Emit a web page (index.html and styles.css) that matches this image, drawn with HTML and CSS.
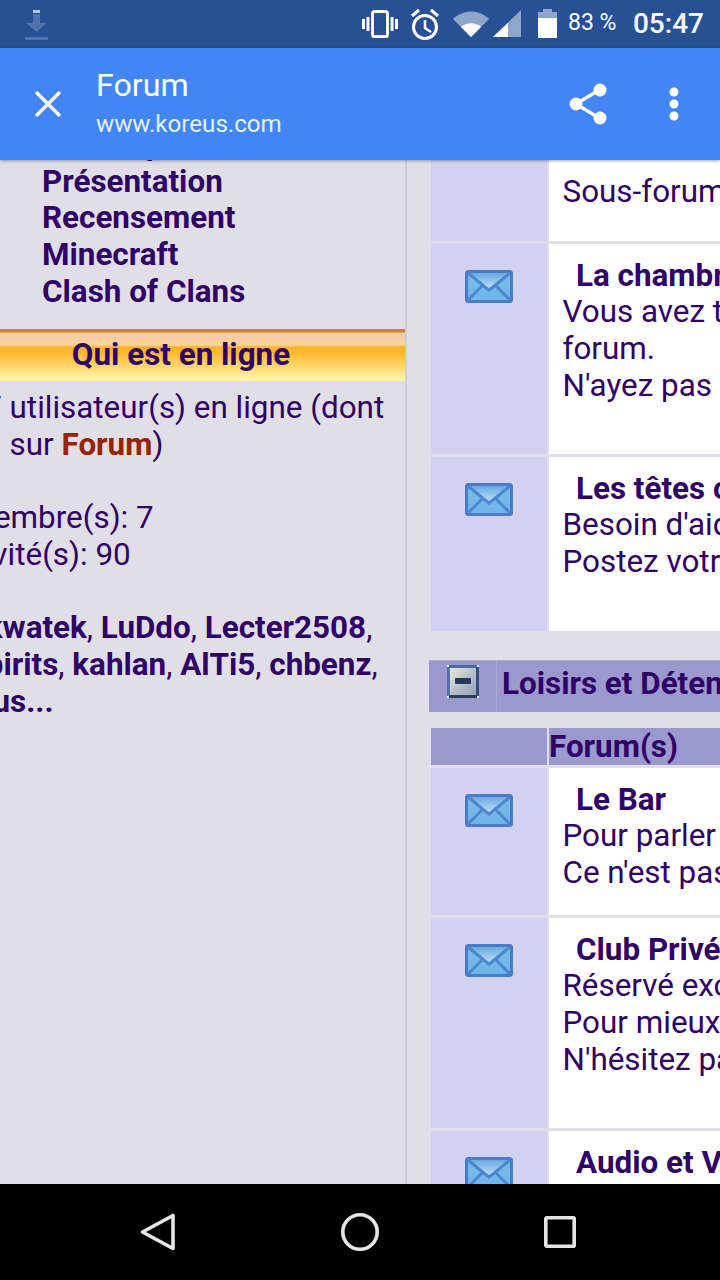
FILE: index.html
```html
<!DOCTYPE html>
<html lang="fr">
<head>
<meta charset="utf-8">
<title>Forum</title>
<link rel="stylesheet" href="styles.css">
</head>
<body>
<svg class="defs" width="0" height="0" aria-hidden="true">
  <defs>
    <linearGradient id="envBody" x1="0" y1="0" x2="0" y2="1">
      <stop offset="0" stop-color="#7ebce8"/>
      <stop offset="1" stop-color="#6cb4ea"/>
    </linearGradient>
    <linearGradient id="envFlap" x1="0" y1="0" x2="0" y2="1">
      <stop offset="0" stop-color="#6aa8e0"/>
      <stop offset="1" stop-color="#bfe2f6"/>
    </linearGradient>
    <linearGradient id="btnFace" x1="0" y1="0" x2="1" y2="1">
      <stop offset="0" stop-color="#f0efdc"/>
      <stop offset="0.55" stop-color="#b4bcc6"/>
      <stop offset="1" stop-color="#94a2c0"/>
    </linearGradient>
    <filter id="soft" x="-5%" y="-5%" width="110%" height="110%">
      <feGaussianBlur stdDeviation="0.5"/>
    </filter>
    <symbol id="env" viewBox="0 0 48 33">
      <g filter="url(#soft)">
        <rect x="1.500" y="1.500" width="45" height="30" rx="2" fill="url(#envBody)" stroke="#4a7cc6" stroke-width="3"/>
        <path d="M5 3H43L24 19Z" fill="url(#envFlap)"/>
        <path d="M3 3L20 17L24 20L28 17L45 3M3 30L18 15M45 30L30 15" fill="none" stroke="#4f86d2" stroke-width="3"/>
      </g>
    </symbol>
  </defs>
</svg>
<div class="status">
  <svg class="st-dl" width="23" height="30" viewBox="0 0 23 30"><path d="M8 0h7v3H8z" fill="#b8c6dc"/><path d="M8 4h7v9h7L11.500 22 1 13h7z" fill="#4f72aa"/><path d="M0 27h23v3H0z" fill="#4f72aa"/></svg>
  <div class="st-right">
    <svg width="36" height="36" viewBox="0 0 36 36"><rect x="10.500" y="5.500" width="15" height="25" rx="2" fill="none" stroke="#fff" stroke-width="3"/><path d="M6 11v14M1.500 13v10M30 11v14M34.500 13v10" stroke="#fff" stroke-width="3" fill="none"/></svg>
    <svg class="st-alarm" width="30" height="36" viewBox="0 0 30 36"><circle cx="15" cy="21" r="11.500" fill="none" stroke="#fff" stroke-width="3"/><path d="M15 14v8l6 4" fill="none" stroke="#fff" stroke-width="2.500"/><path d="M2 10l7-6M28 10l-7-6" stroke="#fff" stroke-width="3" fill="none"/></svg>
    <svg class="st-wifi" width="36" height="30" viewBox="0 0 36 30"><path d="M0 10C10 0 26 0 36 10L18 28Z" fill="#8fa6cb"/><path d="M8 18C14 13 22 13 28 18L18 28Z" fill="#fff"/></svg>
    <svg class="st-signal" width="28" height="30" viewBox="0 0 28 30"><path d="M28 1V28H0Z" fill="#8fa6cb"/><path d="M15 14V28H0Z" fill="#fff"/></svg>
    <svg class="st-batt" width="19" height="30" viewBox="0 0 19 30"><path d="M5 0h9v3h5v6H0V3h5z" fill="#8fa6cb"/><path d="M0 9h19v20H0z" fill="#fff"/></svg>
    <span class="st-pct">83 %</span>
    <span class="st-time">05:47</span>
  </div>
</div>
<header class="appbar">
  <svg class="ab-close" width="30" height="30" viewBox="0 0 30 30"><path d="M3 3L27 27M27 3L3 27" stroke="#fff" stroke-width="3.400" fill="none"/></svg>
  <div class="ab-title">
    <div class="ab-name">Forum</div>
    <div class="ab-url">www.koreus.com</div>
  </div>
  <svg class="ab-share" width="38" height="42" viewBox="0 0 38 42"><path d="M30 7L7 21L30 35" stroke="#fff" stroke-width="3.400" fill="none"/><circle cx="31" cy="7" r="6.500" fill="#fff"/><circle cx="7" cy="21" r="6.500" fill="#fff"/><circle cx="31" cy="35" r="6.500" fill="#fff"/></svg>
  <svg class="ab-more" width="10" height="34" viewBox="0 0 10 34"><circle cx="5" cy="5" r="4.500" fill="#fff"/><circle cx="5" cy="17" r="4.500" fill="#fff"/><circle cx="5" cy="29" r="4.500" fill="#fff"/></svg>
</header>
<main class="page">
  <aside class="left">
    <ul class="menu">
      <li>Mon espace</li>
      <li>Présentation</li>
      <li>Recensement</li>
      <li>Minecraft</li>
      <li>Clash of Clans</li>
    </ul>
    <h2 class="online-bar">Qui est en ligne</h2>
    <div class="online">
      <div class="ln">97 utilisateur(s) en ligne (dont</div>
      <div class="ln">71 sur <b class="red">Forum</b>)</div>
      <div class="ln blank">&nbsp;</div>
      <div class="ln">Membre(s): 7</div>
      <div class="ln">Invité(s): 90</div>
      <div class="ln blank">&nbsp;</div>
      <div class="ln"><b>Skwatek</b>, <b>LuDdo</b>, <b>Lecter2508</b>,</div>
      <div class="ln"><b>Spirits</b>, <b>kahlan</b>, <b>AlTi5</b>, <b>chbenz</b>,</div>
      <div class="ln"><b>plus...</b></div>
    </div>
  </aside>
  <section class="right">
    <div class="table t1">
      <div class="ic"></div>
      <div class="tx"><div class="ln">Sous-forum</div></div>
      <div class="ic"><svg class="env"><use href="#env"/></svg></div>
      <div class="tx"><div class="ln ttl">La chambre</div><div class="ln">Vous avez tout</div><div class="ln">forum.</div><div class="ln">N'ayez pas</div></div>
      <div class="ic"><svg class="env"><use href="#env"/></svg></div>
      <div class="tx"><div class="ln ttl">Les têtes chercheuses</div><div class="ln">Besoin d'aide</div><div class="ln">Postez votre</div></div>
    </div>
    <div class="cat">
      <div class="cat-ic">
        <svg width="32" height="33" viewBox="0 0 32 33">
          <rect x="2" y="2" width="28" height="29" fill="url(#btnFace)"/>
          <path d="M2 1.500H30" stroke="#4a6aa0" stroke-width="3"/>
          <path d="M2 31.500H30" stroke="#2c3c58" stroke-width="3"/>
          <path d="M1.500 2V31" stroke="#5472aa" stroke-width="3"/>
          <path d="M30.500 2V31" stroke="#35507f" stroke-width="3"/>
          <path d="M0 0h2v2H0zM30 0h2v2h-2zM0 31h2v2H0zM30 31h2v2h-2z" fill="#eef0fa"/>
          <rect x="8" y="13" width="16" height="6" rx="1" fill="#26375c" filter="url(#soft)"/>
        </svg>
      </div>
      <div class="cat-name">Loisirs et Détente</div>
    </div>
    <div class="table t2">
      <div class="hd"></div>
      <div class="hd hd-t">Forum(s)</div>
      <div class="ic"><svg class="env"><use href="#env"/></svg></div>
      <div class="tx"><div class="ln ttl">Le Bar</div><div class="ln">Pour parler de tout</div><div class="ln">Ce n'est pas</div></div>
      <div class="ic"><svg class="env"><use href="#env"/></svg></div>
      <div class="tx"><div class="ln ttl">Club Privé</div><div class="ln">Réservé exclusivement</div><div class="ln">Pour mieux</div><div class="ln">N'hésitez pas</div></div>
      <div class="ic"><svg class="env"><use href="#env"/></svg></div>
      <div class="tx"><div class="ln ttl">Audio et Vidéo</div></div>
    </div>
  </section>
</main>
<nav class="navbar">
  <svg width="36" height="38" viewBox="0 0 36 38"><path d="M33 2.500V35.500L2.500 19Z" fill="none" stroke="#e6e6e6" stroke-width="3.600" stroke-linejoin="round"/></svg>
  <svg width="38" height="38" viewBox="0 0 38 38"><circle cx="19" cy="19" r="17.200" fill="none" stroke="#e6e6e6" stroke-width="3.600"/></svg>
  <svg width="32" height="32" viewBox="0 0 32 32"><rect x="1.800" y="1.800" width="28.400" height="28.400" rx="1" fill="none" stroke="#e6e6e6" stroke-width="3.600"/></svg>
</nav>
</body>
</html>
```
FILE: styles.css
```css
* { box-sizing: border-box; }
html, body { margin: 0; padding: 0; }
body {
  width: 720px;
  height: 1280px;
  overflow: hidden;
  font-family: Roboto, sans-serif;
  color: #2f0066;
  background: #e0dfe8;
  display: flex;
  flex-direction: column;
}
.defs { position: absolute; }

.status {
  height: 48px;
  flex: none;
  background: #285095;
  display: flex;
  align-items: center;
  justify-content: space-between;
  padding: 0 16px 0 25px;
  color: #fff;
}
.st-dl { margin-top: 1px; }
.st-right { display: flex; align-items: center; }
.st-alarm { margin-left: 12px; }
.st-wifi { margin-left: 13px; }
.st-signal { margin-left: 4px; }
.st-batt { margin-left: 17px; }
.st-pct { margin-left: 11px; font-size: 23px; margin-top: -4px; width: 65px; }
.st-time { font-size: 28px; font-weight: 500; margin-top: -2px; }

.appbar {
  height: 112px;
  flex: none;
  background: #4285f4;
  color: #fff;
  display: flex;
  align-items: center;
  padding: 0 41px 0 33px;
  box-shadow: 0 1px 3px rgba(0,0,0,.35);
  position: relative;
  z-index: 2;
}
.ab-title { margin-left: 33px; flex: 1; padding-top: 1px; }
.ab-name { font-size: 32.200px; line-height: 38px; }
.ab-url { font-size: 24.150px; line-height: 38px; margin-top: 1px; color: #e8f0fd; }
.ab-share { margin-right: 62px; }

.page {
  height: 1024px;
  flex: none;
  display: flex;
  overflow: hidden;
  font-size: 31.400px;
  line-height: 36.670px;
}
.left {
  width: 407px;
  flex: none;
  border-right: 2px solid #cfcfd2;
}
.menu {
  list-style: none;
  margin: -33px 0 0;
  padding: 0 0 0 42px;
  font-weight: 700;
}
.online-bar {
  margin: 19px 0 9px -43px;
  width: 448px;
  height: 52px;
  font-size: 31.400px;
  line-height: 52px;
  font-weight: 700;
  text-align: center;
  background: linear-gradient(#d0842a 0, #c98030 3px, #f6c8ac 4px, #fcd49a 16px, #ffb52a 18px, #ffb830 24px, #fff0a0 48px, #fdf1a8 52px);
}
.online { margin-left: -33.500px; white-space: nowrap; }
.ln { white-space: nowrap; }
.red { color: #992200; }

.right {
  flex: 1;
  min-width: 0;
  overflow: hidden;
  white-space: nowrap;
}
.table {
  display: grid;
  grid-template-columns: 116px 400px;
  column-gap: 2px;
  row-gap: 3px;
  margin-left: 24px;
  width: 600px;
}
.t1 { grid-template-rows: 81px 210px 174px; }
.t2 { grid-template-rows: 37px 147px 210px 210px; }
.ic {
  background: #d4d0f0;
  display: flex;
  justify-content: center;
  padding-top: 26px;
}
.env { width: 48px; height: 33px; display: block; }
.tx { background: #fff; padding: 13.600px 0 0 13.500px; }
.ttl { font-weight: 700; padding-left: 13.500px; }
.cat {
  display: flex;
  height: 52px;
  margin: 29px 0 16px 22px;
  width: 600px;
  background: #9a98cd;
  border-top: 1px solid #aaa8d6;
}
.cat-ic {
  width: 68px;
  flex: none;
  display: flex;
  align-items: center;
  padding-left: 18px;
  border-right: 1px solid #aaa8d6;
  padding-bottom: 11px;
}
.cat-name { font-weight: 700; margin-left: 5px; line-height: 45px; }
.hd { background: #9a98cd; }
.hd-t { font-weight: 700; padding-top: 1px; }

.navbar {
  height: 96px;
  flex: none;
  background: #000;
  display: grid;
  grid-template-columns: 36px 38px 32px;
  justify-content: center;
  align-items: center;
  column-gap: 165px;
  padding-right: 4px;
}
```
